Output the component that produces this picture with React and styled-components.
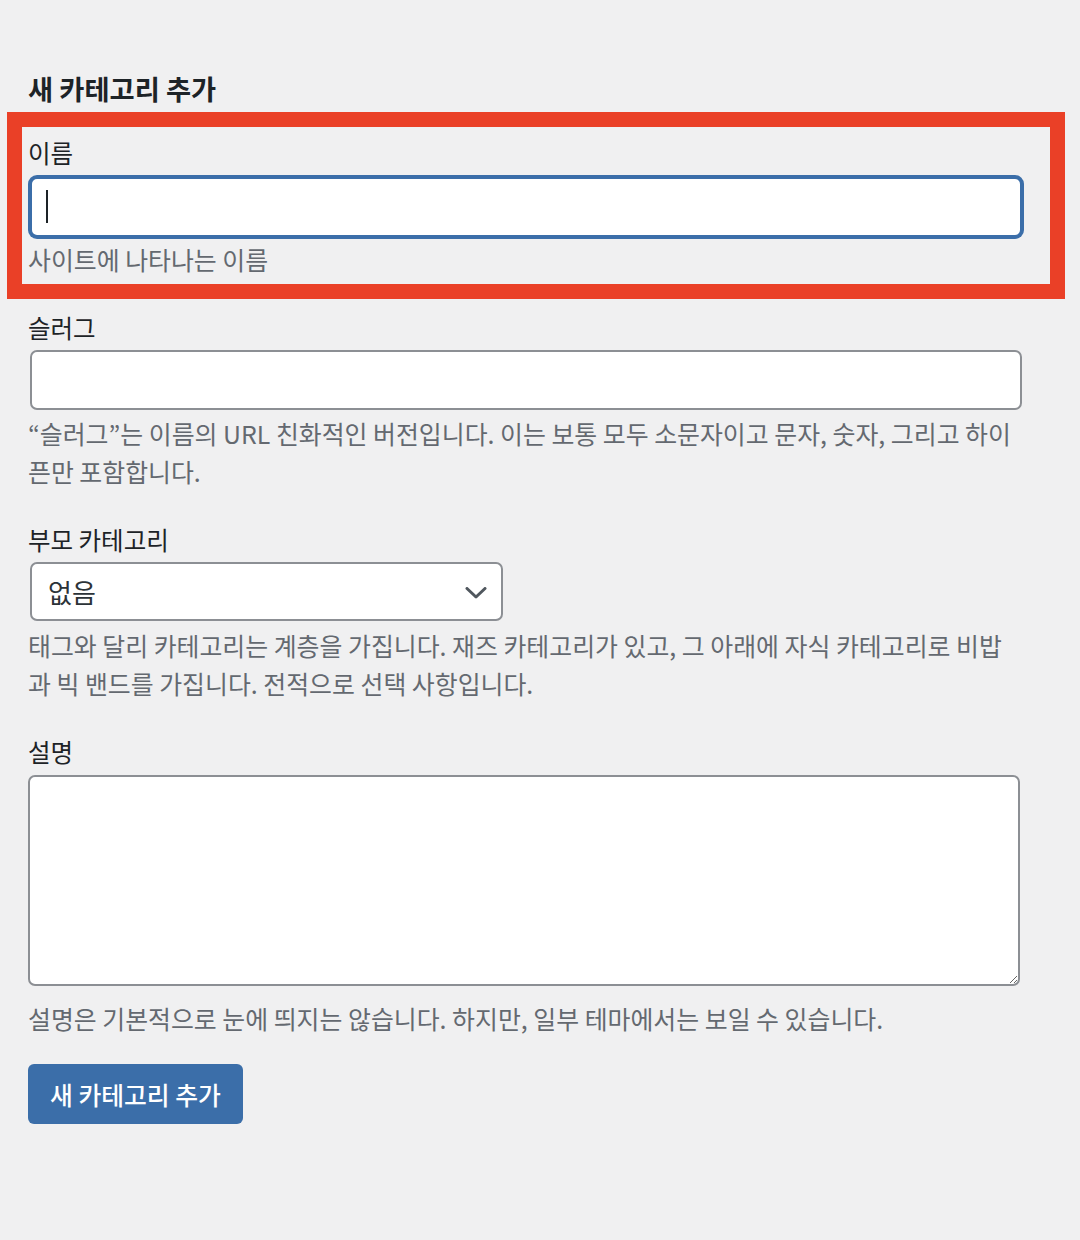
import React from "react";
import styled, { createGlobalStyle } from "styled-components";

const GlobalStyle = createGlobalStyle`
  html, body {
    margin: 0;
    padding: 0;
    background: #f0f0f1;
  }
  body {
    font-family: "Noto Sans CJK KR", "Noto Sans", sans-serif;
    color: #1d2327;
  }
  * { box-sizing: border-box; }
`;

const Page = styled.div`
  padding: 68px 0 80px 28px;
  width: 1022px;
`;

const Title = styled.h2`
  margin: 0 0 4px;
  font-size: 27.3px;
  font-weight: 700;
  line-height: 40px;
  color: #1d2327;
`;

const Highlight = styled.div`
  border: 15px solid #ea4027;
  margin: 0 -43px 0 -21px;
  padding: 7px 28px 5px 6px;
`;

const Field = styled.div`
  margin-top: ${(p) => p.$top || 0}px;
`;

const Label = styled.label`
  display: block;
  font-size: 24.5px;
  line-height: 38px;
  color: #1d2327;
`;

const Hint = styled.p`
  margin: ${(p) => p.$top || 4}px 0 0;
  font-size: 24.9px;
  line-height: 38.5px;
  color: #646970;
`;

const InputWrap = styled.div`
  position: relative;
  margin-top: ${(p) => p.$top || 0}px;
`;

const TextInput = styled.input`
  display: block;
  width: 992px;
  height: 60px;
  margin: 0 2px;
  padding: 0 16px;
  background: #fff;
  border: 2px solid ${(p) => (p.$focused ? "#3b6ea9" : "#8c8f94")};
  box-shadow: ${(p) => (p.$focused ? "0 0 0 2px #3b6ea9" : "none")};
  border-radius: 7px;
  font-family: inherit;
  font-size: 24.5px;
  color: #2c3338;
  outline: none;
`;

const Caret = styled.span`
  position: absolute;
  left: 18px;
  top: 13px;
  width: 2px;
  height: 33px;
  background: #1d2327;
`;

const SelectWrap = styled.div`
  position: relative;
  width: 473px;
  margin: ${(p) => p.$top || 0}px 2px 0;
`;

const Select = styled.select`
  display: block;
  width: 100%;
  height: 59px;
  padding: 0 48px 0 16px;
  appearance: none;
  -webkit-appearance: none;
  background: #fff;
  border: 2px solid #8c8f94;
  border-radius: 7px;
  font-family: inherit;
  font-size: 26px;
  color: #2c3338;
  outline: none;
`;

const Chevron = styled.svg`
  position: absolute;
  right: 16px;
  top: 25px;
  width: 22px;
  height: 12px;
  pointer-events: none;
`;

const TextArea = styled.textarea`
  display: block;
  width: 992px;
  height: 211px;
  margin-top: ${(p) => p.$top || 0}px;
  padding: 8px 16px;
  background: #fff;
  border: 2px solid #8c8f94;
  border-radius: 7px;
  font-family: inherit;
  font-size: 24.5px;
  resize: vertical;
  outline: none;
`;

const Button = styled.button`
  display: block;
  margin-top: ${(p) => p.$top || 0}px;
  height: 60px;
  padding: 0 22px;
  background: #3b6ea9;
  color: #fff;
  border: none;
  border-radius: 6px;
  font-family: inherit;
  font-size: 24.8px;
  font-weight: 500;
  cursor: pointer;
`;

export default function App() {
  return (
    <>
      <GlobalStyle />
      <Page>
        <Title>새 카테고리 추가</Title>
        <Highlight>
          <Label htmlFor="tag-name">이름</Label>
          <InputWrap $top={5}>
            <TextInput id="tag-name" type="text" $focused />
            <Caret />
          </InputWrap>
          <Hint $top={3}>사이트에 나타나는 이름</Hint>
        </Highlight>

        <Field $top={10}>
          <Label htmlFor="tag-slug">슬러그</Label>
          <InputWrap $top={3}>
            <TextInput id="tag-slug" type="text" />
          </InputWrap>
          <Hint $top={4}>
            “슬러그”는 이름의 URL 친화적인 버전입니다. 이는 보통 모두 소문자이고 문자, 숫자, 그리고 하이픈만 포함합니다.
          </Hint>
        </Field>

        <Field $top={30}>
          <Label htmlFor="parent">부모 카테고리</Label>
          <SelectWrap $top={3}>
            <Select id="parent" defaultValue="-1">
              <option value="-1">없음</option>
            </Select>
            <Chevron viewBox="0 0 22 12" fill="none">
              <polyline
                points="2,1.5 11,10 20,1.5"
                stroke="#50575e"
                strokeWidth="3"
                strokeLinecap="round"
                strokeLinejoin="round"
              />
            </Chevron>
          </SelectWrap>
          <Hint $top={5}>
            태그와 달리 카테고리는 계층을 가집니다. 재즈 카테고리가 있고, 그 아래에 자식 카테고리로 비밥과 빅 밴드를 가집니다. 전적으로 선택 사항입니다.
          </Hint>
        </Field>

        <Field $top={30}>
          <Label htmlFor="tag-description">설명</Label>
          <TextArea id="tag-description" $top={4} />
          <Hint $top={13}>
            설명은 기본적으로 눈에 띄지는 않습니다. 하지만, 일부 테마에서는 보일 수 있습니다.
          </Hint>
        </Field>

        <Button type="button" $top={27}>새 카테고리 추가</Button>
      </Page>
    </>
  );
}
